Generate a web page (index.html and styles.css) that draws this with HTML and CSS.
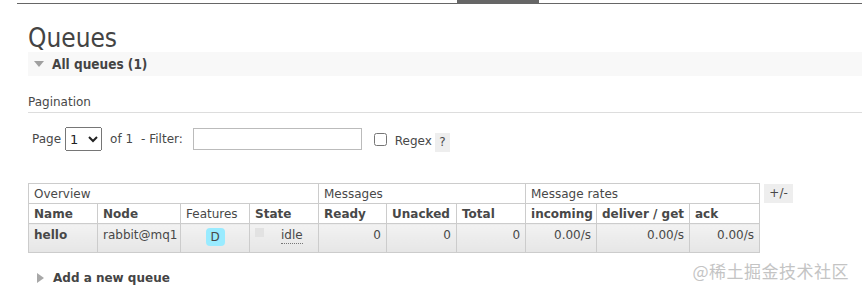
FILE: index.html
```html
<!DOCTYPE html>
<html>
	<head>
		<meta charset="UTF-8">
		<title>Queues</title>
		<link rel="stylesheet" href="styles.css">
	</head>
	<body>
		<div id="menu"><span class="active"></span></div>

		<div id="main">
			<h1>Queues</h1>
			<div class="section">
				<h2 class="open"><span class="arrow down"></span>All queues (1)</h2>

				<h3>Pagination</h3>
				<div class="filter">
					<label>Page</label>
					<select class="pager"><option>1</option></select>
					<span>of 1</span>
					<label>- Filter:</label>
					<input type="text" class="filter-text">
					<input type="checkbox" class="regex">
					<label class="regex-label">Regex</label>
					<span class="help">?</span>
				</div>

				<div class="list-wrap">
					<table class="list">
						<colgroup>
							<col style="width:69px"><col style="width:83px"><col style="width:69px"><col style="width:69px">
							<col style="width:68px"><col style="width:70px"><col style="width:69px">
							<col style="width:71px"><col style="width:93px"><col style="width:70px">
						</colgroup>
						<thead>
							<tr class="group">
								<th colspan="4">Overview</th>
								<th colspan="3">Messages</th>
								<th colspan="3">Message rates</th>
							</tr>
							<tr>
								<th class="sort">Name</th>
								<th class="sort">Node</th>
								<th>Features</th>
								<th class="sort">State</th>
								<th class="sort">Ready</th>
								<th class="sort">Unacked</th>
								<th class="sort">Total</th>
								<th class="sort">incoming</th>
								<th class="sort">deliver / get</th>
								<th class="sort">ack</th>
							</tr>
						</thead>
						<tbody>
							<tr>
								<td class="name">hello</td>
								<td>rabbit@mq1</td>
								<td class="c"><abbr>D</abbr></td>
								<td><span class="status-grey"></span><abbr class="state">idle</abbr></td>
								<td class="r">0</td>
								<td class="r">0</td>
								<td class="r">0</td>
								<td class="r">0.00/s</td>
								<td class="r">0.00/s</td>
								<td class="r">0.00/s</td>
							</tr>
						</tbody>
					</table>
					<span class="toggle">+/-</span>
				</div>
			</div>

			<div class="section">
				<h2 class="closed"><span class="arrow right"></span>Add a new queue</h2>
			</div>
		</div>

		<div class="watermark">@稀土掘金技术社区</div>
	</body>
</html>
```

FILE: styles.css
```css
*{box-sizing:border-box;}
body{margin:0;font:12px "DejaVu Sans",Verdana,sans-serif;color:#484848;position:relative;}

#menu{margin-left:17px;height:4px;border-bottom:1px solid #666;}
#menu .active{display:block;margin-left:440px;width:82px;height:3px;background:#666;}

#main{margin-left:28px;}
h1{margin:20px 0 0;font:normal 26px/28px "DejaVu Sans Condensed","DejaVu Sans",sans-serif;color:#444;}

h2{margin:0;display:flex;align-items:center;color:#444;}
h2.open{height:24px;background:#f8f8f8;padding-left:6px;font:bold 13.5px "DejaVu Sans Condensed","DejaVu Sans",sans-serif;}
h2.closed{margin-top:17px;padding-left:9px;font:bold 12px/16px "DejaVu Sans",sans-serif;}
.arrow{display:inline-block;width:0;height:0;}
.arrow.down{border-left:5.5px solid transparent;border-right:5.5px solid transparent;border-top:6px solid #a0a0a0;margin-right:8px;}
.arrow.right{border-top:5px solid transparent;border-bottom:5px solid transparent;border-left:7px solid #a8a8a8;margin-right:9px;}

h3{margin:18px 0 0;padding-bottom:2px;border-bottom:1px solid #ddd;font:normal 12px/16px "DejaVu Sans",sans-serif;color:#484848;}

.filter{display:flex;align-items:center;height:24px;margin-top:14px;padding-left:4px;}
.filter select.pager{width:37px;height:24px;margin:0 8px 0 4px;font:13px "DejaVu Sans",sans-serif;color:#222;}
.filter .filter-text{width:169px;height:22px;margin:0 0 0 10px;border:1px solid #bbb;}
.filter span{margin-right:8px;}
.filter .regex{width:13px;height:13px;margin:0 8px 0 12px;}
.filter .regex-label{margin-top:4px;}
.filter .help{margin:7px 0 0 3px;width:15px;height:19px;line-height:19px;text-align:center;background:#eee;}

.list-wrap{display:flex;align-items:flex-start;margin-top:32px;}
table.list{border-collapse:collapse;table-layout:fixed;width:731px;}
table.list th,table.list td{border:1px solid #ccc;padding:0 5px;text-align:left;white-space:nowrap;overflow:hidden;}
table.list th{height:20px;line-height:18px;font-weight:normal;background:#fff;}
table.list th.sort{font-weight:bold;}
table.list td{height:29px;line-height:16px;padding-top:3px;vertical-align:top;background:linear-gradient(#f2f2f2,#e6e6e6);}
table.list td.name{font-weight:bold;}
table.list td.r{text-align:right;}
table.list td.c{text-align:center;}
table.list abbr{display:inline-block;background:#99ebff;border-radius:4px;width:19px;height:18px;line-height:19px;text-align:center;margin-top:1px;text-decoration:none;}
table.list abbr.state{background:none;width:auto;height:auto;line-height:15px;border-bottom:1px dotted #777;border-radius:0;margin:0 0 0 17px;}
.status-grey{display:inline-block;width:9px;height:9px;background:#e2e2e2;vertical-align:top;margin-top:1px;}
.toggle{margin:1px 0 0 4px;width:29px;height:19px;line-height:19px;text-align:center;background:#eee;}

.watermark{position:absolute;right:13px;top:258px;font:17px "Noto Sans CJK SC",sans-serif;color:#c4c4c4;letter-spacing:0.5px;}
```
